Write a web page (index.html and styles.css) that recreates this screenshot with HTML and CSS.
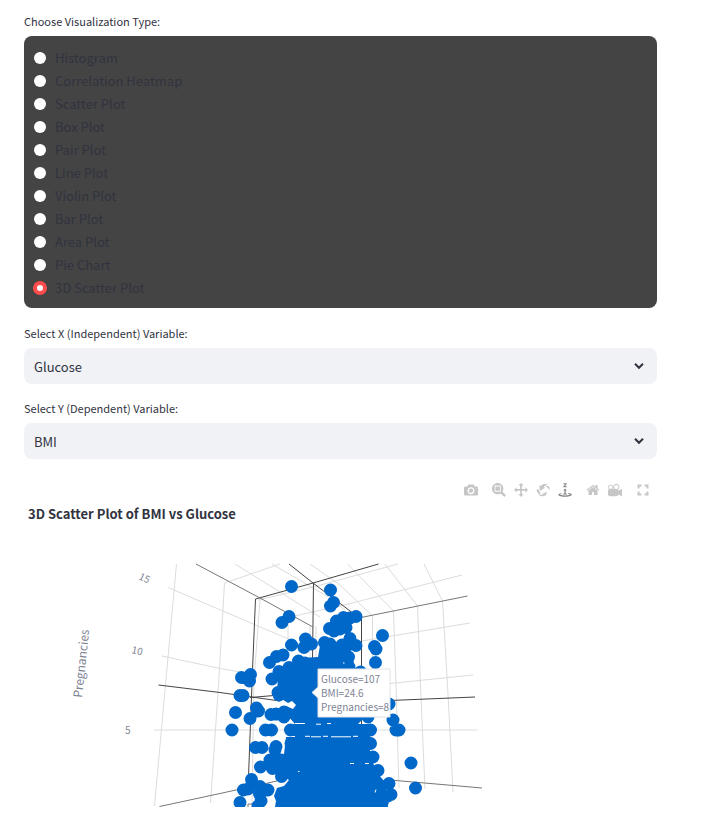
FILE: index.html
```html
<!DOCTYPE html>
<html lang="en">
<head>
<meta charset="utf-8">
<meta name="viewport" content="width=device-width, initial-scale=1">
<title>3D Scatter Plot of BMI vs Glucose</title>
<link rel="stylesheet" href="styles.css">
</head>
<body>
<main class="page">
  <fieldset class="field choices">
    <legend class="label">Choose Visualization Type:</legend>
    <div class="radios">
      <label class="option"><input type="radio" name="viz">Histogram</label>
      <label class="option"><input type="radio" name="viz">Correlation Heatmap</label>
      <label class="option"><input type="radio" name="viz">Scatter Plot</label>
      <label class="option"><input type="radio" name="viz">Box Plot</label>
      <label class="option"><input type="radio" name="viz">Pair Plot</label>
      <label class="option"><input type="radio" name="viz">Line Plot</label>
      <label class="option"><input type="radio" name="viz">Violin Plot</label>
      <label class="option"><input type="radio" name="viz">Bar Plot</label>
      <label class="option"><input type="radio" name="viz">Area Plot</label>
      <label class="option"><input type="radio" name="viz">Pie Chart</label>
      <label class="option"><input type="radio" name="viz" checked>3D Scatter Plot</label>
    </div>
  </fieldset>

  <div class="field">
    <label class="label" for="x-var">Select X (Independent) Variable:</label>
    <div class="select">
      <select id="x-var"><option>Glucose</option></select>
      <svg class="chevron" viewBox="0 0 10 8" aria-hidden="true"><path d="M1 1.8 5 5.8 9 1.8"/></svg>
    </div>
  </div>

  <div class="field">
    <label class="label" for="y-var">Select Y (Dependent) Variable:</label>
    <div class="select">
      <select id="y-var"><option>BMI</option></select>
      <svg class="chevron" viewBox="0 0 10 8" aria-hidden="true"><path d="M1 1.8 5 5.8 9 1.8"/></svg>
    </div>
  </div>

  <section class="chart">
    <div class="modebar">
      <div class="group">
        <button type="button" aria-label="Download plot"><svg viewBox="0 0 1000 1000"><path transform="matrix(1 0 0 -1 0 850)" d="m500 450c-83 0-150-67-150-150 0-83 67-150 150-150 83 0 150 67 150 150 0 83-67 150-150 150z m400 150h-120c-16 0-34 13-39 29l-31 93c-6 15-23 28-40 28h-340c-16 0-34-13-39-28l-31-94c-6-15-23-28-40-28h-120c-55 0-100-45-100-100v-450c0-55 45-100 100-100h800c55 0 100 45 100 100v450c0 55-45 100-100 100z m-400-550c-138 0-250 112-250 250 0 138 112 250 250 250 138 0 250-112 250-250 0-138-112-250-250-250z m365 380c-19 0-35 16-35 35 0 19 16 35 35 35 19 0 35-16 35-35 0-19-16-35-35-35z"/></svg></button>
      </div>
      <div class="group">
        <button type="button" aria-label="Zoom"><svg viewBox="0 0 1000 1000"><path transform="matrix(1 0 0 -1 0 850)" d="m1000-25l-250 251c40 63 63 138 63 218 0 224-182 406-407 406-224 0-406-182-406-406s183-406 407-406c80 0 155 22 218 62l250-250 125 125z m-812 250l0 438 437 0 0-438-437 0z m62 375l313 0 0-312-313 0 0 312z"/></svg></button>
        <button type="button" aria-label="Pan"><svg viewBox="0 0 1000 1000"><path transform="matrix(1 0 0 -1 0 850)" d="m1000 350l-187 188 0-125-250 0 0 250 125 0-188 187-187-187 125 0 0-250-250 0 0 125-188-188 186-187 0 125 252 0 0-250-125 0 187-188 188 188-125 0 0 250 250 0 0-126 187 188z"/></svg></button>
        <button type="button" aria-label="Orbital rotation"><svg viewBox="0 0 1000 1000"><path transform="matrix(1 0 0 -1 0 850)" d="m922 660c-5 4-9 7-14 11-359 263-580-31-580-31l-102 28 58-400c0 1 1 1 2 2 118 108 351 249 351 249s-62 27-100 42c88 83 222 183 347 122 16-8 30-17 44-27-2 1-4 2-6 4z m36-329c0 0 64 229-88 296-62 27-124 14-175-11 157-78 225-208 249-266 8-19 11-31 11-31 2 5 6 15 11 32-5-13-8-20-8-20z m-775-239c70-31 117-50 198-32-121 80-199 346-199 346l-96-15-58-12c0 0 55-226 155-287z m603 133l-317-139c0 0 4-4 19-14 7-5 24-15 24-15s-177-147-389 4c235-287 536-112 536-112l31-22 100 299-4-1z m-298-153c6-4 14-9 24-15 0 0-17 10-24 15z"/></svg></button>
        <button type="button" class="active" aria-label="Turntable rotation"><svg viewBox="0 0 1000 1000"><path transform="matrix(1 0 0 -1 0 850)" d="m833 5l-17 108v41l-130-65 130-66c0 0 0 38 0 39 0-1 36-14 39-25 4-15-6-22-16-30-15-12-39-16-56-20-90-22-187-23-279-23-261 0-341 34-353 59 3 60 228 110 228 110-140-8-351-35-351-116 0-120 293-142 474-142 155 0 477 22 477 142 0 50-74 79-163 96z m-374 94c-58-5-99-21-99-40 0-24 65-43 144-43 79 0 143 19 143 43 0 19-42 34-98 40v216h87l-132 135-133-135h88v-216z m167 515h-136v1c16 16 31 34 46 52l84 109v54h-230v-71h124v-1c-16-17-28-32-44-51l-89-114v-51h245v72z"/></svg></button>
      </div>
      <div class="group">
        <button type="button" aria-label="Reset camera to default"><svg viewBox="0 0 928 1000"><path transform="matrix(1 0 0 -1 0 850)" d="m786 296v-267q0-15-11-26t-25-10h-214v214h-143v-214h-214q-15 0-25 10t-11 26v267q0 1 0 2t0 2l321 264 321-264q1-1 1-4z m124 39l-34-41q-5-5-12-6h-2q-7 0-12 3l-386 322-386-322q-7-4-13-4-7 2-12 7l-35 41q-4 5-3 13t6 12l401 334q18 15 42 15t43-15l136-114v109q0 8 5 13t13 5h107q8 0 13-5t5-13v-227l122-102q5-5 6-12t-4-13z"/></svg></button>
        <button type="button" aria-label="Reset camera to last save"><svg viewBox="0 0 1000 1000"><path transform="matrix(1 0 0 -1 0 850)" d="m938 413l-188-125c0 37-17 71-44 94 64 38 107 107 107 187 0 121-98 219-219 219-121 0-219-98-219-219 0-61 25-117 66-156h-115c30 33 49 76 49 125 0 103-84 187-187 187s-188-84-188-187c0-57 26-107 65-141-38-22-65-62-65-109v-250c0-70 56-126 125-126h500c69 0 125 56 125 126l188-126c34 0 62 28 62 63v375c0 35-28 63-62 63z m-750 0c-69 0-125 56-125 125s56 125 125 125 125-56 125-125-56-125-125-125z m406-1c-87 0-157 70-157 157 0 86 70 156 157 156s156-70 156-156-70-157-156-157z"/></svg></button>
      </div>
      <div class="group">
        <button type="button" aria-label="Fullscreen"><svg viewBox="0 0 14 14"><path d="M1.500 1.500h4v2h-2v2h-2zM8.500 1.500h4v4h-2v-2h-2zM1.500 8.500h2v2h2v2h-4zM10.500 8.500h2v4h-4v-2h2z"/></svg></button>
      </div>
    </div>
    <h2 class="title">3D Scatter Plot of BMI vs Glucose</h2>
    <svg class="plot" viewBox="24 532 633 275" role="img" aria-label="3D scatter plot">
      <g class="grid">
        <path d="M176.500 564 154.500 806M224.500 583 218.500 685 210.500 803M168 587.500 210 605.500 314 650M162 656 220 668.500 252 674M154 730H290M224.500 583 280 564M260 600 254 680 252 805M258 600 313 587 398 564M235 564 288 597 320 617M272 564 330 598 345 610M310 564 340 585 372.500 616V680M347.500 564 393.500 611 396 685 399 788M385 564 417.500 606 420.500 685 425 789M424 564 442.500 601 447.500 685 453 792M462 575 348 604 290 617M470 623 362 641M473 675 385 684M370 730H477M288 617V640M310 626V663M316 626V663"/>
      </g>
      <g class="axis">
        <path d="M158.500 685 220 692.500 280 701M250 697.500 280 695M390 700.500 475 697M289 564 313 583 358 617M255.500 599 313 583 378.500 564M255.500 599 252.500 670 248.500 777M313.500 583 312.500 660M361.500 617V735"/>
        <path class="thin" d="M196 564 260 598 313 627M361 617.500 467.500 596M159.500 806.500 220 793.500 277 781M390 780 482 788M248 807V804H253"/>
      </g>
      <path class="mass" d="M278 674 290 664 301 658 318 657 321 640 345 643 353 657 355 672 366 680V712L362 720 358 724H370V752L376 772 386 783 388 807H275L276 801 274 796 277 788 284 786 289 780 280 774 268 766 272 752 284 754 286 737H295V724L288 716 286 706 293 709 296 705 292 701 288 703 277 696Z"/>
      <path class="dots" d="M291.500 586.500h0M330.500 590h0M333.500 602.500h0M330.500 606h0M289 616.500h0M282 622.500h0M291.500 645h0M305.500 639h0M304 647.500h0M311.500 644h0M283 655h0M276.500 656.500h0M269.500 662.500h0M250.500 674.500h0M241.500 677.500h0M249.500 681h0M272 679h0M279 671.500h0M289 667.500h0M298.500 661h0M305 663h0M356 616.500h0M350 618h0M343.500 617.500h0M336.500 621h0M329.500 628.500h0M346 627.500h0M340 629h0M334 631h0M382.500 635.500h0M374.500 646.500h0M376 649h0M375.500 662.500h0M350 638.500h0M356 645.500h0M348 645h0M342 645h0M324.500 642.500h0M330 644h0M348.500 657h0M349 667h0M360.500 672h0M240 695.500h0M243 695.500h0M235.500 712.500h0M256.500 708h0M258.500 711h0M250 718.500h0M232 730h0M265.500 730h0M271.500 730h0M278 692.500h0M279 695h0M271 714.500h0M276 714h0M284 712h0M284 717h0M290.500 730h0M297 730h0M255.500 747.500h0M262 747.500h0M276 746.500h0M275 750h0M260.500 767h0M270 760h0M272.500 768.500h0M251.500 779.500h0M243.500 790h0M248 789h0M240 802.500h0M260 786.500h0M268 790h0M259.500 794h0M261 801h0M258 806h0M281.500 776.500h0M291 743.500h0M389 704h0M393 720h0M396 730h0M399 730h0M370.500 730h0M370.500 743.500h0M373 757h0M378 770.500h0M389 783.500h0M391 794.500h0M388 796h0M382.500 801.500h0M411 763h0M415.500 788h0M368 717h0"/>
      <path class="gaps" d="M295 723.500h10M316 724.200h5M327 723.500h4M305 736.300h5M311 736.800h10M323 736.300h5M331 736.800h20M353 736.300h5M350 763.500h4M365 763.500h4M376 789.500l-1 3M298 771.500h1.500M343 663h1.500"/>
      <g class="ticks">
        <text transform="translate(138 579) rotate(25)">15</text>
        <text transform="translate(131 653) rotate(12)">10</text>
        <text x="125" y="734">5</text>
      </g>
      <text class="axis-title" transform="translate(82 698) rotate(-84)">Pregnancies</text>
      <g class="tip">
        <path d="M318 669H390V717H318V698L312 692.500 318 687Z"/>
        <text x="321" y="683">Glucose=107</text>
        <text x="321" y="697">BMI=24.6</text>
        <text x="321" y="711">Pregnancies=8</text>
      </g>
    </svg>
  </section>
</main>
</body>
</html>
```
FILE: styles.css
```css
* { box-sizing: border-box; }

body {
  margin: 0;
  background: #fff;
  color: #31333f;
  font-family: "Noto Sans CJK SC", "Open Sans", sans-serif;
  font-size: 13px;
}

.page { padding: 12px 51px 12px 24px; }

.field {
  border: 0;
  margin: 0 0 15px;
  padding: 0;
}

.choices { margin-bottom: 16px; }

.label {
  display: block;
  padding: 0;
  margin-bottom: 6px;
  font-size: 11px;
  line-height: 18px;
}

.radios {
  display: flex;
  flex-direction: column;
  padding: 10px 9px 9px;
  border-radius: 8px;
  background: #444;
}

.option {
  display: flex;
  align-items: center;
  gap: 8px;
  line-height: 23px;
}

.option input {
  appearance: none;
  width: 12px;
  height: 12px;
  margin: 0 1px;
  border-radius: 50%;
  background: #fff;
}

.option input:checked {
  width: 14px;
  height: 14px;
  margin: 0;
  border: 4px solid #ff4b4b;
}

.select {
  display: grid;
  align-items: center;
}

.select select {
  grid-area: 1 / 1;
  appearance: none;
  width: 100%;
  height: 36px;
  padding: 0 32px 0 10px;
  border: 0;
  border-radius: 8px;
  background: #f0f2f6;
  color: inherit;
  font: inherit;
}

.chevron {
  grid-area: 1 / 1;
  justify-self: end;
  width: 10px;
  height: 8px;
  margin-right: 13px;
  pointer-events: none;
}

.chevron path {
  fill: none;
  stroke: #31333f;
  stroke-width: 2;
}

.modebar {
  display: flex;
  justify-content: flex-end;
  gap: 6px;
  padding: 9px 3px 0 0;
}

.group { display: flex; }

.modebar button {
  display: block;
  padding: 0 4px;
  border: 0;
  background: none;
}

.modebar svg {
  display: block;
  width: 14px;
  height: 14px;
  fill: #c6c6c6;
}

.modebar .active svg { fill: #858585; }

.title {
  margin: 7px 0 8px 4px;
  font-size: 13px;
  line-height: 20px;
  font-weight: 700;
}

.plot {
  display: block;
  width: 100%;
  height: auto;
}

.grid {
  fill: none;
  stroke: #dcdcdc;
  stroke-width: 1;
}

.axis {
  fill: none;
  stroke: #444;
  stroke-width: 1;
}

.axis .thin { stroke: #777; }

.mass { fill: #0068c9; }

.dots {
  fill: none;
  stroke: #0068c9;
  stroke-width: 13;
  stroke-linecap: round;
}

.gaps {
  fill: none;
  stroke: #fff;
  stroke-width: 1;
}

.ticks text {
  fill: #808495;
  font-size: 10px;
}

.axis-title {
  fill: #808495;
  font-size: 12px;
}

.tip path {
  fill: #fff;
  stroke: #e0e2e8;
}

.tip text {
  fill: #808495;
  font-size: 10px;
}
```
